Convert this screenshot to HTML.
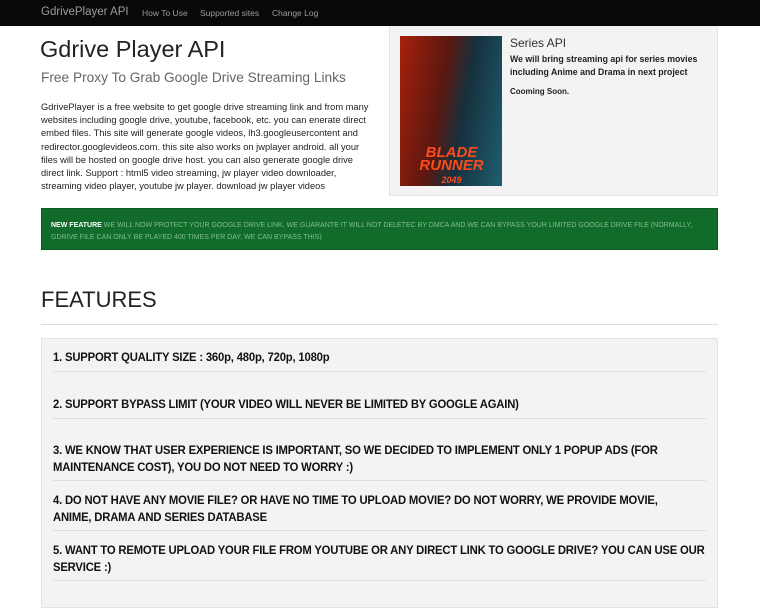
<!DOCTYPE html>
<html><head><meta charset="utf-8"><style>
*{margin:0;padding:0;box-sizing:border-box}
body{width:760px;height:600px;overflow:hidden;background:#fff;font-family:"Liberation Sans",sans-serif;color:#222;position:relative}
.nav{position:absolute;left:0;top:0;width:760px;height:26px;background:#080808}
.nav span{position:absolute;top:8px;color:#9d9d9d;font-size:8.5px}
.a{position:absolute;white-space:nowrap;transform-origin:0 0}
.well{position:absolute;left:389px;top:26px;width:329px;height:170px;background:#f3f3f3;border:1px solid #e3e3e3;border-top:none}
.poster{position:absolute;left:400px;top:36px;width:102px;height:150px;background:linear-gradient(100deg,#a8200c 0%,#5a1810 40%,#16303d 60%,#1f5f6f 100%)}
.green{position:absolute;left:41px;top:208px;width:677px;height:42px;background:#116b2a;border:1px solid #0d5a22}
.feat{position:absolute;left:41px;top:338px;width:677px;height:270px;background:#f3f3f3;border:1px solid #e3e3e3}
.li{position:absolute;left:53px;font-weight:bold;font-size:12px;line-height:17px;color:#111;white-space:nowrap;letter-spacing:-0.2px;transform:scaleX(0.94);transform-origin:0 0}
.hr{position:absolute;left:53px;width:653px;height:1px;background:#ddd}
</style></head><body>
<div class="nav">
<span style="left:41px;top:6px;font-size:11.5px">GdrivePlayer API</span>
<span style="left:142px">How To Use</span>
<span style="left:200px">Supported sites</span>
<span style="left:272px">Change Log</span>
</div>
<div class="a" style="left:40px;top:36px;font-size:23.5px;color:#222">Gdrive Player API</div>
<div class="a" style="left:41px;top:70px;font-size:13.7px;color:#666">Free Proxy To Grab Google Drive Streaming Links</div>
<div class="a" style="left:41px;top:101px;font-size:9.6px;line-height:13.2px;color:#222;transform:scaleX(0.97)">GdrivePlayer is a free website to get google drive streaming link and from many<br>websites including google drive, youtube, facebook, etc. you can enerate direct<br>embed files. This site will generate google videos, lh3.googleusercontent and<br>redirector.googlevideos.com. this site also works on jwplayer android. all your<br>files will be hosted on google drive host. you can also generate google drive<br>direct link. Support : html5 video streaming, jw player video downloader,<br>streaming video player, youtube jw player. download jw player videos</div>
<div class="well"></div>
<div class="poster"><div style="position:absolute;left:14px;top:110px;color:#ff4a1a;font-weight:bold;font-style:italic;font-size:15px;line-height:13px;text-align:center;width:75px">BLADE<br>RUNNER<br><span style="font-size:9px">2049</span></div></div>
<div class="a" style="left:510px;top:36px;font-size:12px;color:#333">Series API</div>
<div class="a" style="left:510px;top:53px;font-size:9.5px;line-height:13px;color:#222;font-weight:bold;transform:scaleX(0.92)">We will bring streaming api for series movies<br>including Anime and Drama in next project</div>
<div class="a" style="left:510px;top:87px;font-size:8px;font-weight:bold;color:#222">Cooming Soon.</div>
<div class="green"></div>
<div class="a" style="left:51px;top:219px;font-size:7.3px;line-height:12px;color:#7fbf8f;transform:scaleX(0.96)"><b style="color:#fff">NEW FEATURE</b> WE WILL NOW PROTECT YOUR GOOGLE DRIVE LINK, WE GUARANTE IT WILL NOT DELETEC BY DMCA AND WE CAN BYPASS YOUR LIMITED GOOGLE DRIVE FILE (NORMALLY,<br>GDRIVE FILE CAN ONLY BE PLAYED 400 TIMES PER DAY, WE CAN BYPASS THIS)</div>
<div class="a" style="left:41px;top:287px;font-size:22px;color:#222">FEATURES</div>
<div style="position:absolute;left:41px;top:324px;width:677px;height:1px;background:#ddd"></div>
<div class="feat"></div>
<div class="li" style="top:349px">1. SUPPORT QUALITY SIZE : 360p, 480p, 720p, 1080p</div>
<div class="hr" style="top:371px"></div>
<div class="li" style="top:396px">2. SUPPORT BYPASS LIMIT (YOUR VIDEO WILL NEVER BE LIMITED BY GOOGLE AGAIN)</div>
<div class="hr" style="top:418px"></div>
<div class="li" style="top:442px">3. WE KNOW THAT USER EXPERIENCE IS IMPORTANT, SO WE DECIDED TO IMPLEMENT ONLY 1 POPUP ADS (FOR<br>MAINTENANCE COST), YOU DO NOT NEED TO WORRY :)</div>
<div class="hr" style="top:480px"></div>
<div class="li" style="top:492px">4. DO NOT HAVE ANY MOVIE FILE? OR HAVE NO TIME TO UPLOAD MOVIE? DO NOT WORRY, WE PROVIDE MOVIE,<br>ANIME, DRAMA AND SERIES DATABASE</div>
<div class="hr" style="top:530px"></div>
<div class="li" style="top:542px">5. WANT TO REMOTE UPLOAD YOUR FILE FROM YOUTUBE OR ANY DIRECT LINK TO GOOGLE DRIVE? YOU CAN USE OUR<br>SERVICE :)</div>
<div class="hr" style="top:580px"></div>
</body></html>
